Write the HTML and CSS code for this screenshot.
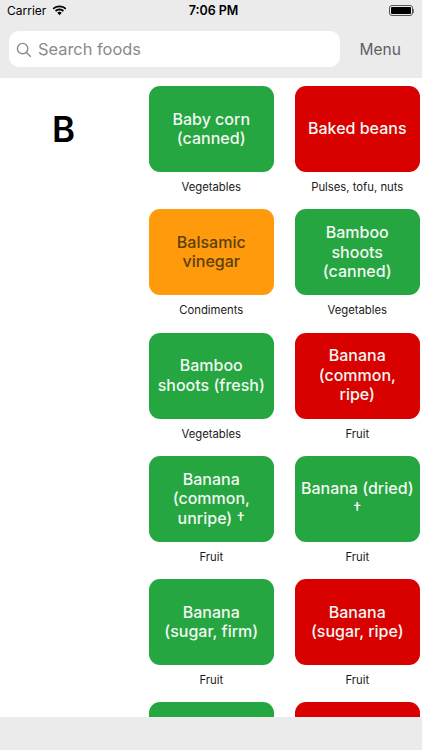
FILE: index.html
```html
<!DOCTYPE html>
<html lang="en">
<head>
<meta charset="utf-8">
<title>Search foods</title>
<link rel="stylesheet" href="styles.css">
</head>
<body>
<div class="app">
  <header class="header">
    <div class="status">
      <div class="status-left">
        <span>Carrier</span>
        <svg class="wifi" viewBox="0 0 15 11" width="15" height="11"><path d="M7.5 2.2c2.2 0 4.2.8 5.7 2.2l1.1-1.2C12.5 1.4 10.1.4 7.5.4S2.5 1.4.7 3.2l1.1 1.2c1.5-1.4 3.5-2.2 5.7-2.2z"/><path d="M7.5 5.4c1.3 0 2.4.5 3.3 1.3l1.2-1.2C10.800 4.300 9.200 3.600 7.500 3.600S4.200 4.300 3 5.500l1.200 1.200c.9-.8 2-1.300 3.300-1.300z"/><path d="M7.500 6.800c-.9 0-1.600.3-2.200.9l2.200 2.500 2.200-2.500c-.6-.6-1.300-.9-2.200-.9z"/></svg>
      </div>
      <span class="clock">7:06 PM</span>
      <div class="battery"><span class="battery-body"><span class="battery-fill"></span></span><span class="battery-cap"></span></div>
    </div>
    <div class="toolbar">
      <div class="search">
        <svg class="search-icon" viewBox="0 0 16 16" width="16" height="16"><circle cx="6.600" cy="6.600" r="5.200"/><line x1="10.500" y1="10.500" x2="14.800" y2="14.800"/></svg>
        <span>Search foods</span>
      </div>
      <span class="menu">Menu</span>
    </div>
  </header>
  <main class="content">
    <div class="letter">B</div>
    <div class="grid">
      <div class="item"><div class="card green">Baby corn<br>(canned)</div><div class="cat">Vegetables</div></div>
      <div class="item"><div class="card red">Baked beans</div><div class="cat">Pulses, tofu, nuts</div></div>
      <div class="item"><div class="card orange">Balsamic<br>vinegar</div><div class="cat">Condiments</div></div>
      <div class="item"><div class="card green">Bamboo<br>shoots<br>(canned)</div><div class="cat">Vegetables</div></div>
      <div class="item"><div class="card green">Bamboo<br>shoots (fresh)</div><div class="cat">Vegetables</div></div>
      <div class="item"><div class="card red">Banana<br>(common,<br>ripe)</div><div class="cat">Fruit</div></div>
      <div class="item"><div class="card green">Banana<br>(common,<br>unripe) †</div><div class="cat">Fruit</div></div>
      <div class="item"><div class="card green">Banana (dried)<br>†</div><div class="cat">Fruit</div></div>
      <div class="item"><div class="card green">Banana<br>(sugar, firm)</div><div class="cat">Fruit</div></div>
      <div class="item"><div class="card red">Banana<br>(sugar, ripe)</div><div class="cat">Fruit</div></div>
      <div class="item"><div class="card green"></div></div>
      <div class="item"><div class="card red"></div></div>
    </div>
  </main>
  <footer class="footer"></footer>
</div>
</body>
</html>
```
FILE: styles.css
```css
* { box-sizing: border-box; }
html, body { margin: 0; padding: 0; }
body { font-family: Inter, "Liberation Sans", sans-serif; background: #fff; color: #000; }
.app { width: 422px; height: 750px; display: flex; flex-direction: column; overflow: hidden; }
.header { height: 78px; flex: none; background: #ebebeb; display: flex; flex-direction: column; }
.status { height: 20px; display: flex; align-items: center; justify-content: space-between; padding: 1px 7px 0 7px; position: relative; font-size: 12px; }
.status-left { display: flex; align-items: center; gap: 6px; }
.wifi { fill: #000; }
.clock { position: absolute; left: 5px; right: 0; text-align: center; font-weight: 600; font-size: 12.500px; }
.battery { display: flex; align-items: center; margin-right: 1px; }
.battery-body { width: 24px; height: 11px; border: 1px solid #555; border-radius: 3px; padding: 1px; display: block; }
.battery-fill { display: block; height: 100%; background: #000; border-radius: 1px; }
.battery-cap { width: 1.500px; height: 4px; background: #777; }
.toolbar { display: flex; align-items: center; padding: 11px 0 0 9px; }
.search { width: 331px; height: 36px; background: #fff; border-radius: 10px; display: flex; align-items: center; gap: 6px; padding-left: 7px; color: #8a8a8e; font-size: 16.400px; }
.search-icon { fill: none; stroke: #8a8a8e; stroke-width: 1.400; margin-top: 1px; }
.menu { margin-left: 19.500px; font-size: 15.500px; color: #5f5f5f; }
.content { flex: 1; display: flex; overflow: hidden; min-height: 0; padding-top: 8px; }
.letter { width: 127px; flex: none; text-align: center; font-size: 35px; font-weight: 600; line-height: 42px; padding-top: 22px; }
.grid { display: grid; grid-template-columns: 124.500px 124.500px; column-gap: 21.500px; grid-auto-rows: 123.300px; margin-left: 22px; }
.card { height: 86px; border-radius: 11px; display: flex; align-items: center; justify-content: center; text-align: center; padding: 0 4px; font-size: 16px; font-weight: 500; line-height: 19.500px; color: #f2f7f2; white-space: nowrap; }
.green { background: #25a640; }
.red { background: #d90000; }
.orange { background: #ff9a0d; color: #5c4008; }
.cat { margin-top: 8px; text-align: center; font-size: 11.300px; line-height: 14px; color: #1a1a1a; }
.footer { height: 33px; flex: none; background: #ebebeb; }
```
